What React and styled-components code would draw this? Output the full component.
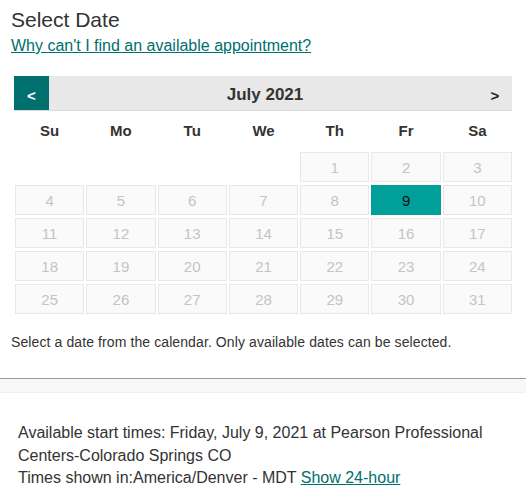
import React from "react";
import styled, { createGlobalStyle } from "styled-components";

const GlobalStyle = createGlobalStyle`
    body {
        margin: 0;
        background: #fff;
        font-family: "Liberation Sans", Arial, sans-serif;
        color: #333;
    }
`;

const Page = styled.div`
    width: 526px;
    overflow: hidden;
`;

const Top = styled.section`
    padding: 8px 0 0 11px;
`;

const Title = styled.h2`
    margin: 0;
    font-size: 21px;
    line-height: 24px;
    font-weight: 400;
    color: #333;
`;

const HelpLink = styled.a`
    display: inline-block;
    margin-top: 4px;
    font-size: 16px;
    line-height: 20px;
    color: #00706f;
    text-decoration: underline;
`;

const Calendar = styled.div`
    margin: 20px 0 0 14px;
    width: 498px;
`;

const MonthBar = styled.div`
    display: flex;
    align-items: center;
    height: 34px;
    background: #e8e8e8;
    border-bottom: 1px solid #dcdcdc;
`;

const NavButton = styled.button`
    width: ${(p) => (p.$active ? "35px" : "34px")};
    height: 100%;
    border: 0;
    padding: 0;
    background: ${(p) => (p.$active ? "#00706f" : "transparent")};
    color: ${(p) => (p.$active ? "#fff" : "#222")};
    font-family: inherit;
    font-size: 15px;
    font-weight: 700;
    padding-top: 4px;
`;

const MonthLabel = styled.div`
    flex: 1;
    text-align: center;
    font-size: 17px;
    font-weight: 700;
    color: #333;
    padding: 3px 0 0 3px;
`;

const Grid = styled.div`
    display: grid;
    grid-template-columns: repeat(7, 1fr);
    column-gap: 2px;
    row-gap: 3px;
    width: 497px;
    margin-left: 1px;
`;

const DayName = styled.div`
    height: 38px;
    display: flex;
    align-items: center;
    justify-content: center;
    font-size: 15px;
    font-weight: 700;
    color: #333;
`;

const Cell = styled.div`
    height: 28px;
    display: flex;
    align-items: center;
    justify-content: center;
    font-size: 15px;
    border: 1px solid ${(p) => (p.$selected ? "#009f9a" : p.$empty ? "transparent" : "#e8e8e8")};
    background: ${(p) => (p.$selected ? "#009f9a" : p.$empty ? "transparent" : "#fafafa")};
    color: ${(p) => (p.$selected ? "#111" : "#c4c4c4")};
`;

const Note = styled.p`
    margin: 19px 0 0 11px;
    font-size: 14px;
    letter-spacing: 0.1px;
    line-height: 18px;
    color: #333;
`;

const Divider = styled.div`
    margin-top: 27px;
    border-top: 1px solid #9a9a9a;
    height: 13px;
    background: #f8f8f8;
    border-bottom: 1px solid #efefef;
`;

const Times = styled.div`
    padding: 29px 18px 0 18px;
    font-size: 16px;
    line-height: 22.5px;
    color: #333;
`;

const TimesLink = styled.a`
    color: #00706f;
    text-decoration: underline;
`;

const dayNames = ["Su", "Mo", "Tu", "We", "Th", "Fr", "Sa"];

const days = [null, null, null, null];
for (let d = 1; d <= 31; d++) days.push(d);

export default function App() {
    return (
        <Page>
            <GlobalStyle />
            <Top>
                <Title>Select Date</Title>
                <HelpLink href="#">Why can't I find an available appointment?</HelpLink>
            </Top>
            <Calendar>
                <MonthBar>
                    <NavButton $active>&lt;</NavButton>
                    <MonthLabel>July 2021</MonthLabel>
                    <NavButton>&gt;</NavButton>
                </MonthBar>
                <Grid>
                    {dayNames.map((n) => (
                        <DayName key={n}>{n}</DayName>
                    ))}
                    {days.map((d, i) =>
                        d === null ? (
                            <Cell key={"e" + i} $empty />
                        ) : (
                            <Cell key={d} $selected={d === 9}>
                                {d}
                            </Cell>
                        )
                    )}
                </Grid>
            </Calendar>
            <Note>Select a date from the calendar. Only available dates can be selected.</Note>
            <Divider />
            <Times>
                Available start times: Friday, July 9, 2021 at Pearson Professional Centers-Colorado
                Springs CO
                <br />
                Times shown in:America/Denver - MDT <TimesLink href="#">Show 24-hour</TimesLink>
            </Times>
        </Page>
    );
}
